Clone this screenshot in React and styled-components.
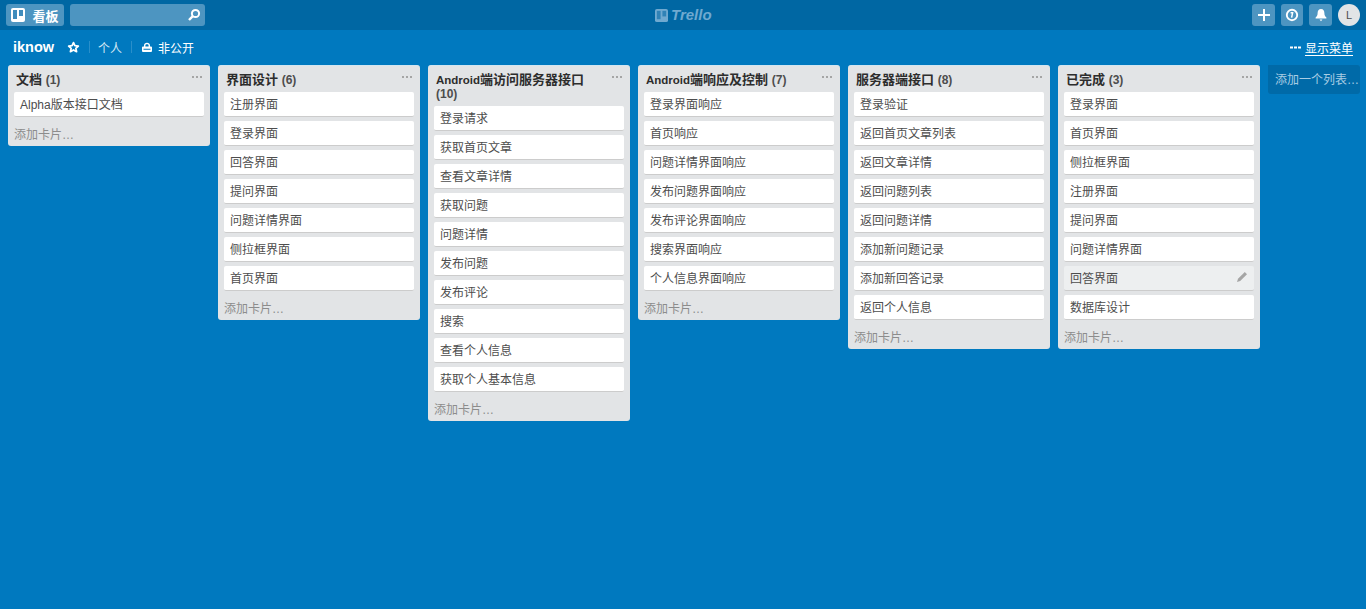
import React from 'react';
import styled, { createGlobalStyle } from 'styled-components';

const Global = createGlobalStyle`
  html, body { margin: 0; padding: 0; height: 100%; background: #0079bf; overflow: hidden; }
  #root { height: 100%; }
  * { box-sizing: border-box; }
  body { font-family: "Liberation Sans", "Noto Sans CJK SC", sans-serif; font-size: 13px; color: #333; }
`;

const Page = styled.div`
  height: 609px; display: flex; flex-direction: column; background: #0079bf;
`;
const TopBar = styled.header`
  height: 30px; flex: none; display: flex; align-items: center; justify-content: space-between;
  padding: 0 6px; background: #0067a3; position: relative;
`;
const Group = styled.div`display: flex; align-items: center; gap: ${p => p.$gap ?? 6}px;`;
const HeaderBtn = styled.div`
  height: 22px; width: ${p => p.$w || 23}px; display: flex; align-items: center; justify-content: center; gap: 7px;
  background: #4d95c1; border-radius: 3px; color: #fff; font-weight: 700; font-size: 13px;
`;
const Search = styled.div`
  width: 135px; height: 22px; background: #4d95c1; border-radius: 3px; display: flex; align-items: center;
  justify-content: flex-end; padding-right: 4px;
`;
const Avatar = styled.div`
  width: 22px; height: 22px; border-radius: 50%; background: #e2e4e6; color: #4d4d4d; font-size: 11px;
  display: flex; align-items: center; justify-content: center;
`;
const Logo = styled.div`
  position: absolute; left: 655px; top: 4px; display: flex; align-items: center; gap: 3px; color: #6fa9d0;
  font-family: "Liberation Sans", sans-serif; font-style: italic; font-weight: 700; font-size: 15px; line-height: 22px;
`;
const BoardBar = styled.div`
  height: 35px; flex: none; display: flex; align-items: center; justify-content: space-between; padding: 0 13px 1px; color: #fff;
`;
const BoardTitle = styled.div`font-size: 14.5px; font-weight: 700; margin-right: 13px;`;
const Sep = styled.span`width: 1px; height: 12px; background: #2a8fca; margin: 0 ${p => p.$r}px 0 9px;`;
const Meta = styled.span`font-size: 12px; color: ${p => p.$dim ? '#d5e8f4' : '#fff'}; display: flex; align-items: center; gap: 5px;`;
const Menu = styled.span`display: flex; align-items: center; gap: 4px; font-size: 12px; u { text-underline-offset: 2px; }`;
const Board = styled.main`
  display: flex; align-items: flex-start; gap: 8px; padding: 0 8px;
`;
const List = styled.section`
  width: 202px; flex: none; background: #e2e4e6; border-radius: 3px; padding: 0 6px; position: relative;
  border-top: 1px solid #d3e6f1;
`;
const ListHead = styled.h2`
  margin: 0; padding: 7px 34px 5px 2px; font-size: 13px; line-height: 14px; font-weight: 700; color: #2d2d2d;
`;
const Latin = styled.span`font-size: 11.5px;`;
const Count = styled.span`font-size: 12px; font-weight: 700; color: #4d4d4d;`;
const Dots = styled.i`
  position: absolute; right: 7px; top: 10px; width: 11px; height: 2px;
  background: radial-gradient(circle at 1px 1px, #a5a5a5 1px, transparent 1.1px) 0 0 / 4px 2px repeat-x;
`;
const Card = styled.div`
  height: 25px; margin-bottom: 4px; background: ${p => p.$hover ? '#edeff0' : '#fff'}; border-radius: 2px;
  border-bottom: 1px solid #ccc; padding: 0 6px 2px; display: flex; align-items: center; justify-content: space-between;
  font-size: 12px; color: #4d4d4d;
`;
const AddCard = styled.div`
  height: 25px; padding-top: 6px; font-size: 12px; line-height: 17px; color: #8c8c8c;
`;
const AddList = styled.div`
  width: 92px; height: 29px; flex: none; background: #006aa8; color: #a8cde4; font-size: 12px; padding: 0 7px;
  line-height: 31px; white-space: nowrap; overflow: hidden; border-radius: 0 3px 3px 3px;
`;

const Mark = ({ s = 14, c = '#fff', h = '#3f8cbc' }) => (
  <svg width={s} height={s} viewBox="0 0 14 14">
    <rect width="14" height="14" rx="2" fill={c} />
    <rect x="2" y="2" width="4" height="9" fill={h} />
    <rect x="8" y="2" width="4" height="6" fill={h} />
  </svg>
);
const SearchIcon = () => (
  <svg width="14" height="14" viewBox="0 0 14 14" fill="none" stroke="#fff">
    <circle cx="8.5" cy="5.5" r="3.6" strokeWidth="2" />
    <path d="M5.8 8.2 2 12" strokeWidth="2.4" />
  </svg>
);
const Plus = () => (
  <svg width="12" height="12" viewBox="0 0 12 12"><path d="M5 0h2v5h5v2H7v5H5V7H0V5h5z" fill="#fff" /></svg>
);
const Info = () => (
  <svg width="14" height="14" viewBox="0 0 14 14" fill="none" stroke="#fff">
    <circle cx="7" cy="7" r="5.2" strokeWidth="1.9" />
    <path d="M5.600 4.800h2L6.600 9.600" strokeWidth="1.500" />
  </svg>
);
const Bell = () => (
  <svg width="14" height="14" viewBox="0 0 14 14" fill="#fff">
    <path d="M7 1c2.400 0 3.400 1.900 3.400 4.200 0 2 .8 3.300 2 4.300v1H1.600v-1c1.200-1 2-2.300 2-4.300C3.600 2.900 4.600 1 7 1z" />
    <path d="M5.500 11.500h3L7 13.300z" />
  </svg>
);
const Star = () => (
  <svg width="13" height="13" viewBox="0 0 14 14" fill="none" stroke="#fff" strokeWidth="1.900" strokeLinejoin="round">
    <path d="M7 1.800 8.500 5.100l3.700.4-2.700 2.400.8 3.600L7 9.700l-3.300 1.800.8-3.600L1.800 5.500l3.700-.4z" />
  </svg>
);
const Lock = () => (
  <svg width="12" height="11" viewBox="0 0 12 11" fill="#fff">
    <path d="M3 5V3.500C3 1.800 4.300.8 6 .8s3 1 3 2.700V5H7.600V3.500C7.600 2.700 7 2.200 6 2.200s-1.600.5-1.600 1.300V5z" />
    <path fillRule="evenodd" d="M2 4.500h8a1 1 0 0 1 1 1V9a1 1 0 0 1-1 1H2a1 1 0 0 1-1-1V5.500a1 1 0 0 1 1-1zM2.500 6.700v1h7v-1z" />
  </svg>
);
const Pencil = () => (
  <svg width="12" height="12" viewBox="0 0 12 12" fill="#a5a5a5"><path d="M8.800 1 11 3.200 4.200 10 1 11l1-3.200z" /></svg>
);
const More = () => (
  <svg width="11" height="3" viewBox="0 0 11 3" fill="#fff"><rect y=".5" width="3" height="2" /><rect x="4" y=".5" width="3" height="2" /><rect x="8" y=".5" width="3" height="2" /></svg>
);

const lists = [
  { t: '文档', n: 1, c: ['Alpha版本接口文档'] },
  { t: '界面设计', n: 6, c: ['注册界面', '登录界面', '回答界面', '提问界面', '问题详情界面', '侧拉框界面', '首页界面'] },
  { l: 'Android', t: '端访问服务器接口', n: 10, c: ['登录请求', '获取首页文章', '查看文章详情', '获取问题', '问题详情', '发布问题', '发布评论', '搜索', '查看个人信息', '获取个人基本信息'] },
  { l: 'Android', t: '端响应及控制', n: 7, c: ['登录界面响应', '首页响应', '问题详情界面响应', '发布问题界面响应', '发布评论界面响应', '搜索界面响应', '个人信息界面响应'] },
  { t: '服务器端接口', n: 8, c: ['登录验证', '返回首页文章列表', '返回文章详情', '返回问题列表', '返回问题详情', '添加新问题记录', '添加新回答记录', '返回个人信息'] },
  { t: '已完成', n: 3, c: ['登录界面', '首页界面', '侧拉框界面', '注册界面', '提问界面', '问题详情界面', '回答界面', '数据库设计'], hover: 6 },
];

export default function App() {
  return (
    <Page>
      <Global />
      <TopBar>
        <Group>
          <HeaderBtn $w={58}><Mark />看板</HeaderBtn>
          <Search><SearchIcon /></Search>
        </Group>
        <Logo><Mark s={13} c="#6fa9d0" h="#2f82b6" />Trello</Logo>
        <Group>
          <HeaderBtn><Plus /></HeaderBtn>
          <HeaderBtn $w={22}><Info /></HeaderBtn>
          <HeaderBtn><Bell /></HeaderBtn>
          <Avatar>L</Avatar>
        </Group>
      </TopBar>
      <BoardBar>
        <Group $gap={0}>
          <BoardTitle>iknow</BoardTitle>
          <Star />
          <Sep $r={8} />
          <Meta $dim>个人</Meta>
          <Sep $r={9} />
          <Meta><Lock />非公开</Meta>
        </Group>
        <Menu><More /><u>显示菜单</u></Menu>
      </BoardBar>
      <Board>
        {lists.map(l => (
          <List key={l.t}>
            <ListHead>{l.l && <Latin>{l.l}</Latin>}{l.t} <Count>({l.n})</Count></ListHead>
            <Dots />
            {l.c.map((c, i) => (
              <Card key={c} $hover={l.hover === i}>{c}{l.hover === i && <Pencil />}</Card>
            ))}
            <AddCard>添加卡片…</AddCard>
          </List>
        ))}
        <AddList>添加一个列表…</AddList>
      </Board>
    </Page>
  );
}
